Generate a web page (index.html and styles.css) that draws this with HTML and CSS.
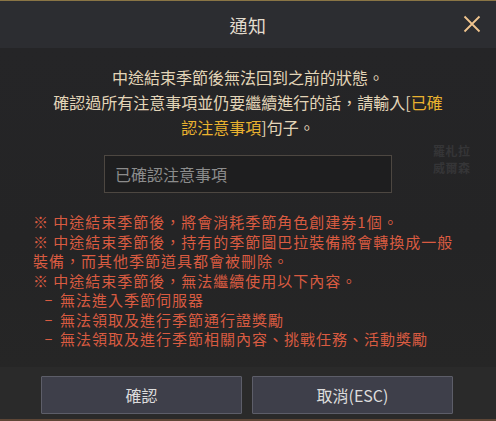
FILE: index.html
```html
<!DOCTYPE html>
<html lang="zh-Hant">
<head>
<meta charset="utf-8">
<title>通知</title>
<link rel="stylesheet" href="styles.css">
</head>
<body>
<div class="dialog">
  <header class="header">
    <h1 class="title">通知</h1>
    <button class="close" aria-label="關閉">
      <svg width="18" height="18" viewBox="0 0 18 18"><path d="M1.5 1.5 L16.5 16.5 M16.5 1.5 L1.5 16.5" stroke="#f0c48e" stroke-width="1.8" fill="none"/></svg>
    </button>
  </header>
  <main class="content">
    <span class="bg-name">羅札拉<br>威爾森</span>
    <p class="intro">中途結束季節後無法回到之前的狀態。<br>確認過所有注意事項並仍要繼續進行的話，請輸入[<span class="hl">已確<br>認注意事項</span>]句子。</p>
    <input class="field" type="text" placeholder="已確認注意事項">
    <div class="warnings">
      <p>※ 中途結束季節後，將會消耗季節角色創建券1個。</p>
      <p>※ 中途結束季節後，持有的季節圖巴拉裝備將會轉換成一般<br>裝備，而其他季節道具都會被刪除。</p>
      <p>※ 中途結束季節後，無法繼續使用以下內容。</p>
      <ul class="sub">
        <li>無法進入季節伺服器</li>
        <li>無法領取及進行季節通行證獎勵</li>
        <li>無法領取及進行季節相關內容、挑戰任務、活動獎勵</li>
      </ul>
    </div>
  </main>
  <footer class="footer">
    <button class="btn">確認</button>
    <button class="btn">取消(ESC)</button>
  </footer>
</div>
</body>
</html>
```
FILE: styles.css
```css
* { box-sizing: border-box; }
html, body { margin: 0; padding: 0; }
body {
  width: 496px;
  height: 421px;
  background: #252527;
  font-family: "Noto Sans CJK TC", "Noto Sans", sans-serif;
  overflow: hidden;
}
.dialog {
  width: 496px;
  height: 421px;
  display: flex;
  flex-direction: column;
  border-top: 1px solid #8a7545;
  border-bottom: 2px solid #5e4636;
}
.header {
  position: relative;
  height: 47px;
  flex: none;
  display: flex;
  align-items: center;
  justify-content: center;
  background: #2c2d31;
}
.title {
  margin: 0;
  font-size: 18px;
  font-weight: normal;
  color: #e2dbcd;
  letter-spacing: 0.5px;
}
.close {
  position: absolute;
  right: 15px;
  top: 14px;
  width: 18px;
  height: 18px;
  padding: 0;
  border: 0;
  background: none;
  display: flex;
}
.content {
  position: relative;
  flex: 1;
  display: flex;
  flex-direction: column;
  background: linear-gradient(180deg, #252527 0%, #242425 60%, #262626 100%);
  padding-top: 17px;
}
.bg-name {
  position: absolute;
  left: 433px;
  top: 94px;
  font-size: 12px;
  line-height: 17px;
  color: #353537;
  font-weight: bold;
  letter-spacing: 0.5px;
}
.intro {
  margin: 0;
  text-align: center;
  font-size: 16px;
  line-height: 25px;
  color: #e3d5b8;
}
.hl { color: #e9b22f; }
.field {
  align-self: center;
  margin-top: 15px;
  width: 288px;
  height: 38px;
  padding: 0 10px;
  background: #1e1e1f;
  border: 1px solid #4d4741;
  font-family: inherit;
  font-size: 16px;
  color: #ccc;
  outline: none;
}
.field::placeholder { color: #8c8c8c; }
.warnings {
  margin-top: 19px;
  padding-left: 33px;
  color: #d95b41;
  font-size: 15px;
  letter-spacing: 1px;
  line-height: 19.5px;
}
.warnings p { margin: 0; }
.sub {
  list-style: none;
  margin: 0;
  padding: 0 0 0 11px;
}
.sub li::before {
  content: "－";
  display: inline-block;
  width: 16px;
  transform: scaleX(0.6);
  transform-origin: left center;
}
.footer {
  height: 52px;
  flex: none;
  display: flex;
  gap: 10px;
  padding: 9px 0 0 41px;
  background: #2a2a2a;
}
.btn {
  width: 201px;
  height: 38px;
  background: #3e3f4a;
  border: 1px solid #5d5e69;
  border-radius: 1px;
  color: #dcdcdc;
  font-family: inherit;
  font-size: 16px;
  padding: 0;
}
```
